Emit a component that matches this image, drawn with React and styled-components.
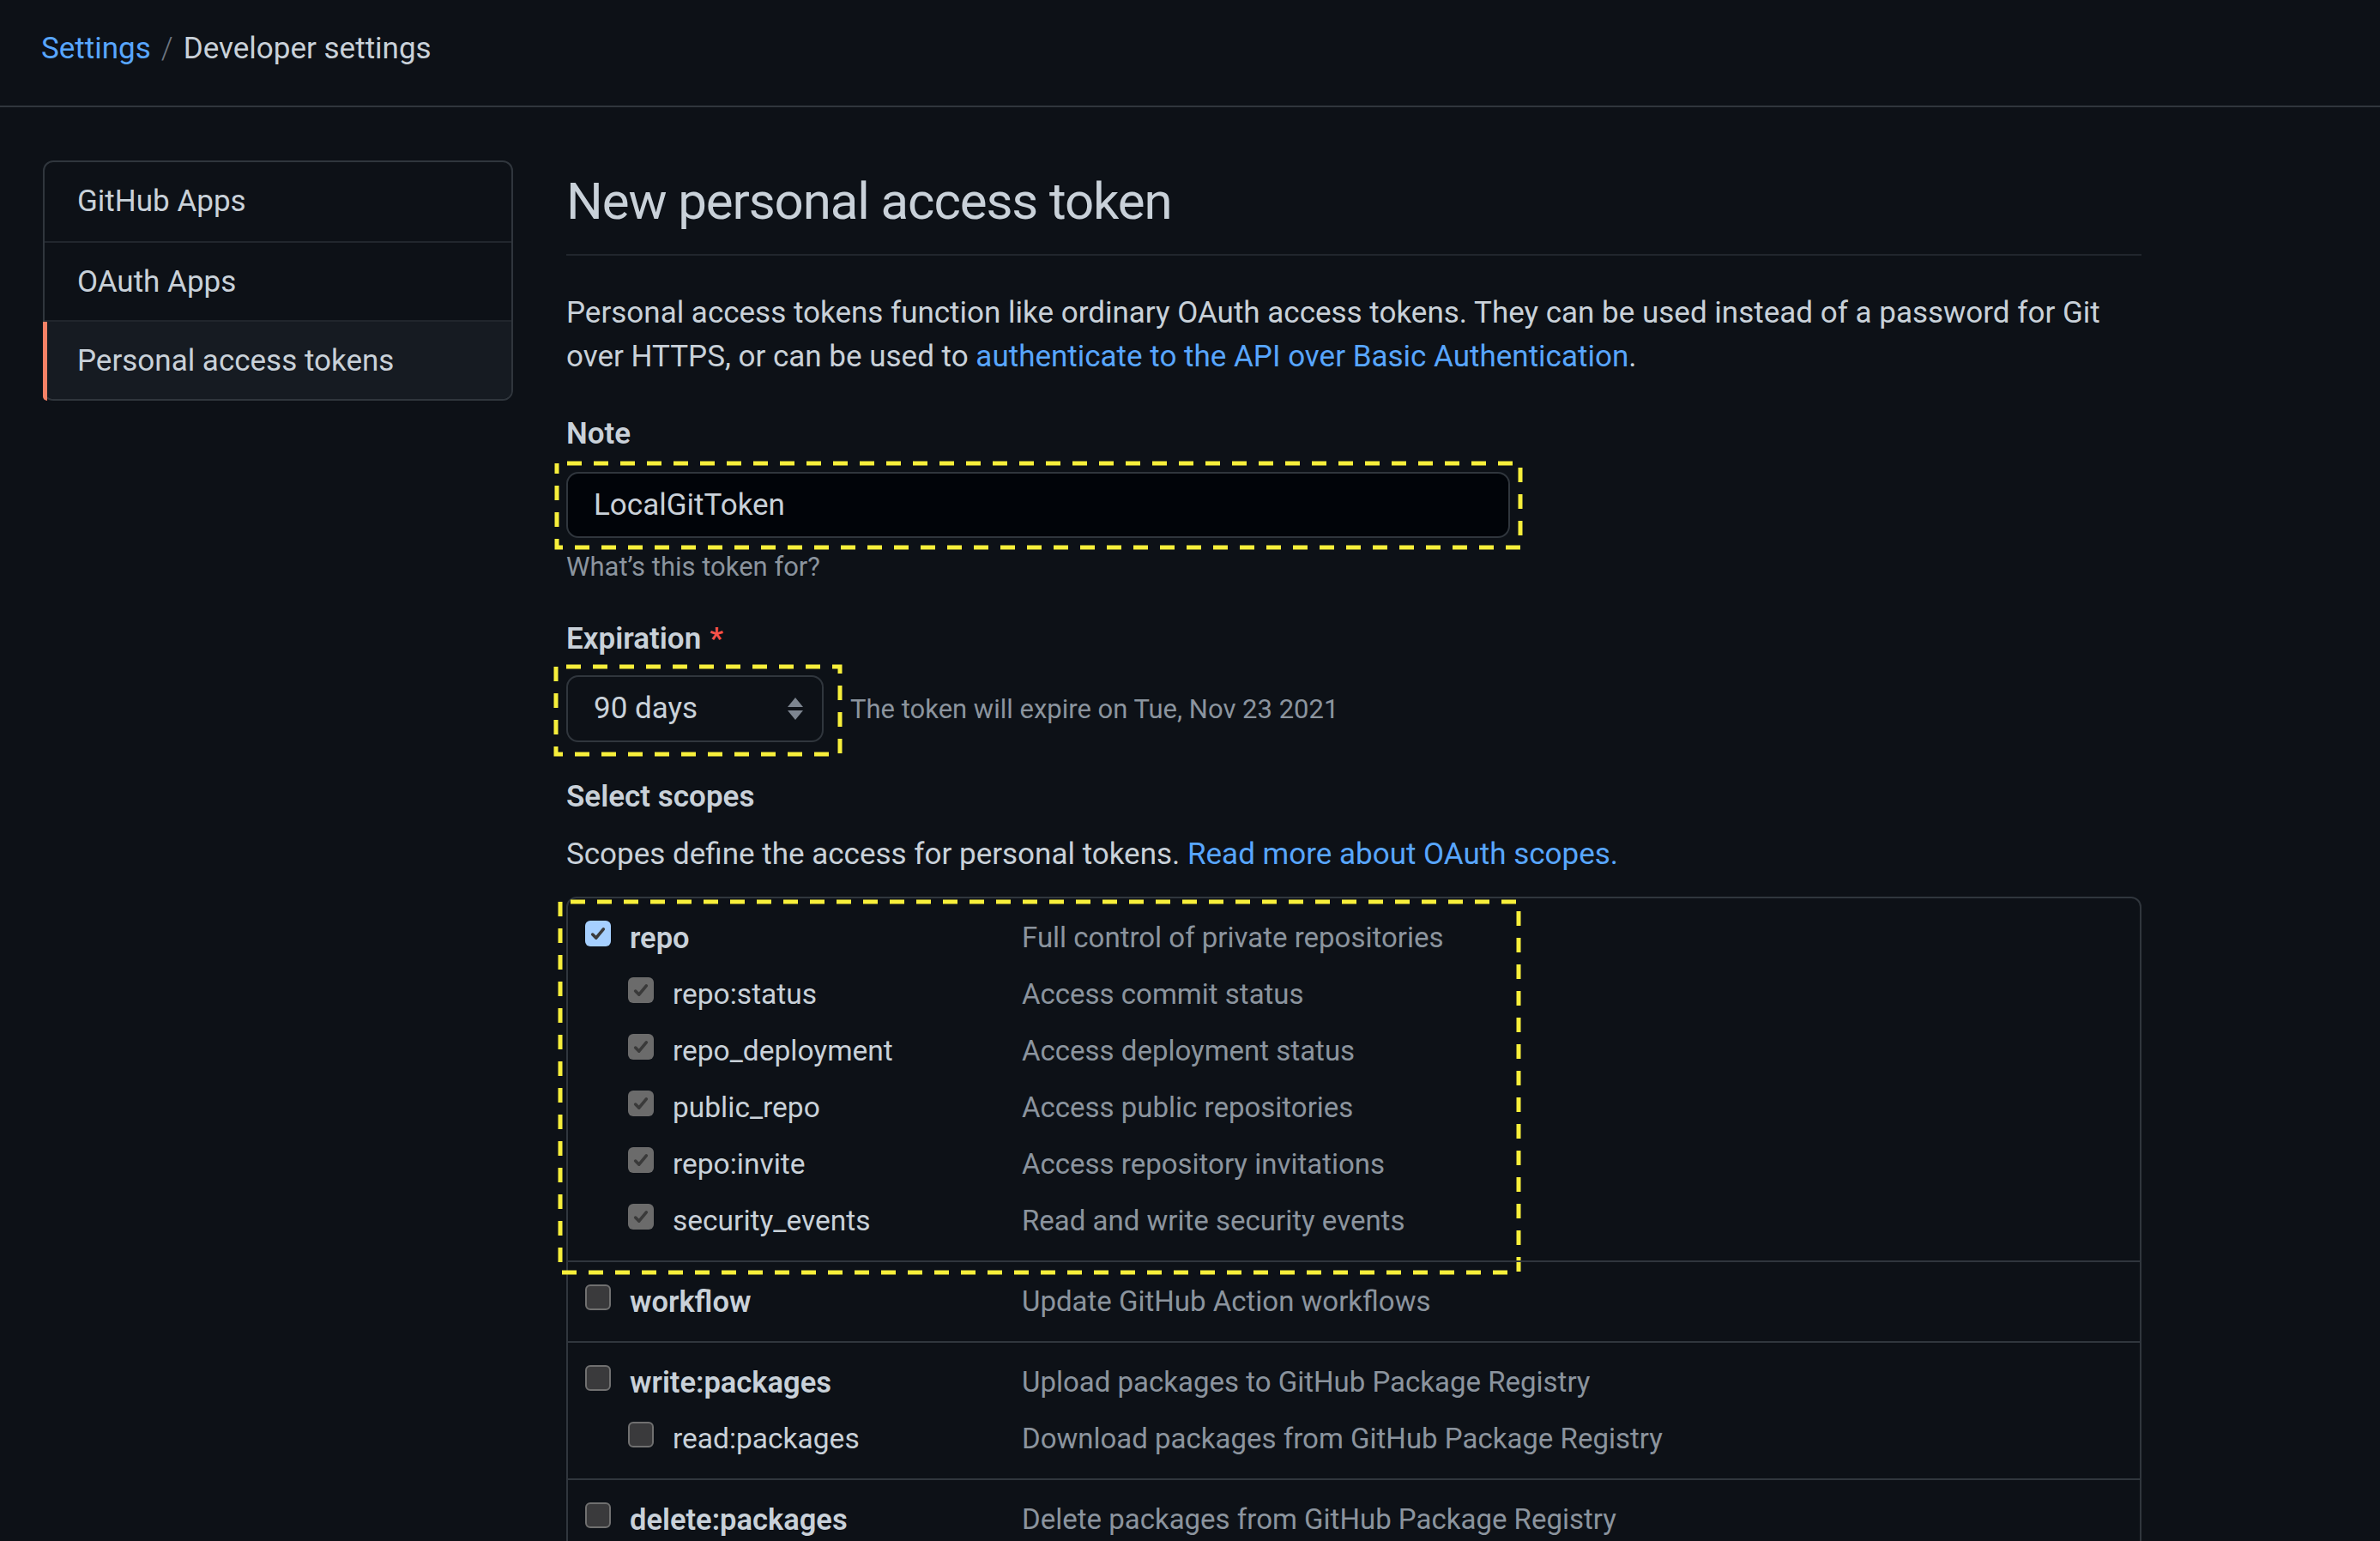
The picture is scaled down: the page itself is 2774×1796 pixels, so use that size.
import React from "react";
import styled, { createGlobalStyle, css } from "styled-components";

const GlobalStyle = createGlobalStyle`
  * { box-sizing: border-box; }
  html, body {
    margin: 0;
    background: #0d1117;
  }
  body {
    font-family: Roboto, Inter, "Liberation Sans", sans-serif;
    color: #c9d1d9;
    font-size: 35px;
    line-height: 1.5;
  }
`;

const Header = styled.header`
  height: 125px;
  display: flex;
  align-items: center;
  padding: 0 48px 8px;
  border-bottom: 2px solid #30363d;
`;

const Crumb = styled.a`
  color: ${(p) => (p.$current ? "#c9d1d9" : "#58a6ff")};
  text-decoration: none;
`;

const Divider = styled.span`
  color: #6e7681;
  margin: 0 12px;
  font-weight: 300;
`;

const Layout = styled.div`
  display: flex;
  align-items: flex-start;
  gap: 62px;
  padding: 62px 278px 0 50px;
`;

const Sidebar = styled.nav`
  width: 548px;
  flex: none;
  border: 2px solid #30363d;
  border-radius: 12px;
`;

const SideItem = styled.a`
  position: relative;
  display: block;
  height: 92px;
  line-height: 92px;
  padding-left: 38px;
  color: #c9d1d9;
  text-decoration: none;
  & + & {
    border-top: 2px solid #21262d;
  }
  &:last-child {
    border-radius: 0 0 10px 10px;
  }
  ${(p) =>
    p.$active &&
    css`
      background: #161b22;
      &::before {
        content: "";
        position: absolute;
        left: -2px;
        top: 0;
        bottom: -2px;
        width: 5px;
        background: #f78166;
        border-bottom-left-radius: 10px;
      }
    `}
`;

const Main = styled.main`
  flex: 1;
  min-width: 0;
  padding-top: 3px;
`;

const Subhead = styled.div`
  padding-bottom: 16px;
  border-bottom: 2px solid #21262d;
  margin-bottom: 41px;
`;

const Title = styled.h1`
  margin: 0;
  font-size: 60px;
  font-weight: 400;
  letter-spacing: -1.1px;
  line-height: 90px;
  color: #c9d1d9;
`;

const Lead = styled.p`
  margin: ${(p) => p.$top || 0}px 0 0;
  line-height: 51px;
`;

const Link = styled.a`
  color: #58a6ff;
  text-decoration: none;
`;

const Label = styled.label`
  display: block;
  margin-top: ${(p) => p.$top || 0}px;
  font-weight: 600;
  line-height: 52px;
`;

const Required = styled.span`
  color: #f85149;
  margin-left: 10px;
`;

const Marked = styled.div`
  position: relative;
  width: ${(p) => p.$width || "auto"};
`;

// yellow dashed annotation drawn over a control
const DashFrame = styled.svg`
  position: absolute;
  overflow: visible;
  pointer-events: none;
  top: ${(p) => p.$box[0]}px;
  left: ${(p) => p.$box[1]}px;
  width: ${(p) => p.$box[2]};
  height: ${(p) => p.$box[3]};
`;

const Dashes = ({ box }) => (
  <DashFrame $box={box}>
    <rect
      x="0"
      y="0"
      width="100%"
      height="100%"
      fill="none"
      stroke="#f7ef3b"
      strokeWidth="5"
      strokeDasharray="17 14"
      strokeDashoffset="-12"
    />
  </DashFrame>
);

const TextInput = styled.input`
  display: block;
  width: 1100px;
  height: 77px;
  margin-top: 18px;
  padding: 0 30px;
  font: inherit;
  color: #c9d1d9;
  background: #010409;
  border: 2px solid #30363d;
  border-radius: 14px;
  outline: none;
`;

const Note = styled.p`
  margin: ${(p) => p.$top || 0}px 0 0;
  font-size: 31px;
  line-height: 45px;
  color: #8b949e;
`;

const SelectRow = styled.div`
  display: flex;
  align-items: center;
  gap: 31px;
  margin-top: 16px;
`;

const Select = styled.div`
  width: 300px;
  height: 78px;
  display: flex;
  align-items: center;
  justify-content: space-between;
  padding: 0 22px 0 30px;
  background: #0d1117;
  border: 2px solid #30363d;
  border-radius: 14px;
  color: #c9d1d9;
`;

const ScopeTable = styled.div`
  margin-top: 24px;
  border: 2px solid #30363d;
  border-radius: 12px;
`;

const ScopeGroup = styled.div`
  position: relative;
  padding: 13px 0;
  & + & {
    border-top: 2px solid #30363d;
  }
`;

const ScopeRow = styled.div`
  display: grid;
  grid-template-columns: 509px 1fr;
  height: 66px;
  padding-left: 20px;
`;

const ScopeName = styled.div`
  display: flex;
  align-items: flex-start;
  gap: 22px;
  padding-left: ${(p) => (p.$child ? 50 : 0)}px;
  line-height: 66px;
  font-size: ${(p) => (p.$child ? 33.5 : 34.5)}px;
  font-weight: ${(p) => (p.$child ? 400 : 600)};
  white-space: nowrap;
`;

const ScopeDesc = styled.div`
  line-height: 66px;
  font-size: 33px;
  color: #8b949e;
  white-space: nowrap;
`;

const Box = styled.span`
  flex: none;
  width: 30px;
  height: 30px;
  margin-top: 13px;
  border-radius: 6px;
  display: flex;
  align-items: center;
  justify-content: center;
  ${(p) =>
    p.$state === "on" &&
    css`
      background: #a6d0ff;
    `}
  ${(p) =>
    p.$state === "locked" &&
    css`
      background: #6b6b6b;
    `}
  ${(p) =>
    p.$state === "off" &&
    css`
      background: #3a3a3c;
      border: 2px solid #707070;
    `}
`;

const CheckMark = () => (
  <svg width="22" height="22" viewBox="0 0 16 16" fill="none">
    <path
      d="M3.4 8.8 L6.4 11.8 L12.6 4.2"
      stroke="#3a3a3a"
      strokeWidth="2.6"
      strokeLinecap="round"
      strokeLinejoin="round"
    />
  </svg>
);

const Checkbox = ({ state }) => (
  <Box $state={state}>{state !== "off" && <CheckMark />}</Box>
);

const UpDown = () => (
  <svg width="18" height="26" viewBox="0 0 18 26">
    <path d="M9 0 L18 11 H0 Z" fill="#7d8590" />
    <path d="M0 15 H18 L9 26 Z" fill="#7d8590" />
  </svg>
);

const scopes = [
  {
    name: "repo",
    desc: "Full control of private repositories",
    checked: true,
    highlight: true,
    children: [
      ["repo:status", "Access commit status"],
      ["repo_deployment", "Access deployment status"],
      ["public_repo", "Access public repositories"],
      ["repo:invite", "Access repository invitations"],
      ["security_events", "Read and write security events"],
    ],
  },
  { name: "workflow", desc: "Update GitHub Action workflows" },
  {
    name: "write:packages",
    desc: "Upload packages to GitHub Package Registry",
    children: [["read:packages", "Download packages from GitHub Package Registry"]],
  },
  { name: "delete:packages", desc: "Delete packages from GitHub Package Registry" },
  {
    name: "admin:org",
    desc: "Full control of orgs and teams, read and write org projects",
    children: [
      ["write:org", "Read and write org and team membership, read and write org projects"],
      ["read:org", "Read org and team membership, read org projects"],
    ],
  },
];

const App = () => {
  return (
    <>
      <GlobalStyle />
      <Header>
        <Crumb href="#">Settings</Crumb>
        <Divider>/</Divider>
        <Crumb $current>Developer settings</Crumb>
      </Header>
      <Layout>
        <Sidebar>
          <SideItem href="#">GitHub Apps</SideItem>
          <SideItem href="#">OAuth Apps</SideItem>
          <SideItem href="#" $active>
            Personal access tokens
          </SideItem>
        </Sidebar>
        <Main>
          <Subhead>
            <Title>New personal access token</Title>
          </Subhead>
          <Lead>
            Personal access tokens function like ordinary OAuth access tokens. They can be used
            instead of a password for Git over HTTPS, or can be used to{" "}
            <Link href="#">authenticate to the API over Basic Authentication</Link>.
          </Lead>

          <Label $top={39}>Note</Label>
          <Marked $width="1100px">
            <TextInput defaultValue="LocalGitToken" />
            <Dashes box={[-10, -11, "calc(100% + 23px)", "calc(100% + 21px)"]} />
          </Marked>
          <Note $top={11}>What’s this token for?</Note>

          <Label $top={36}>
            Expiration<Required>*</Required>
          </Label>
          <SelectRow>
            <Marked>
              <Select>
                <span>90 days</span>
                <UpDown />
              </Select>
              <Dashes box={[-10, -12, "calc(100% + 31px)", "calc(100% + 24px)"]} />
            </Marked>
            <Note>The token will expire on Tue, Nov 23 2021</Note>
          </SelectRow>

          <Label $top={38}>Select scopes</Label>
          <Lead $top={15}>
            Scopes define the access for personal tokens.{" "}
            <Link href="#">Read more about OAuth scopes.</Link>
          </Lead>

          <ScopeTable>
            {scopes.map((group) => (
              <ScopeGroup key={group.name}>
                <ScopeRow>
                  <ScopeName>
                    <Checkbox state={group.checked ? "on" : "off"} />
                    {group.name}
                  </ScopeName>
                  <ScopeDesc>{group.desc}</ScopeDesc>
                </ScopeRow>
                {(group.children || []).map(([name, desc]) => (
                  <ScopeRow key={name}>
                    <ScopeName $child>
                      <Checkbox state={group.checked ? "locked" : "off"} />
                      {name}
                    </ScopeName>
                    <ScopeDesc>{desc}</ScopeDesc>
                  </ScopeRow>
                ))}
                {group.highlight && <Dashes box={[4, -9, "1117px", "432px"]} />}
              </ScopeGroup>
            ))}
          </ScopeTable>
        </Main>
      </Layout>
    </>
  );
};

export default App;
